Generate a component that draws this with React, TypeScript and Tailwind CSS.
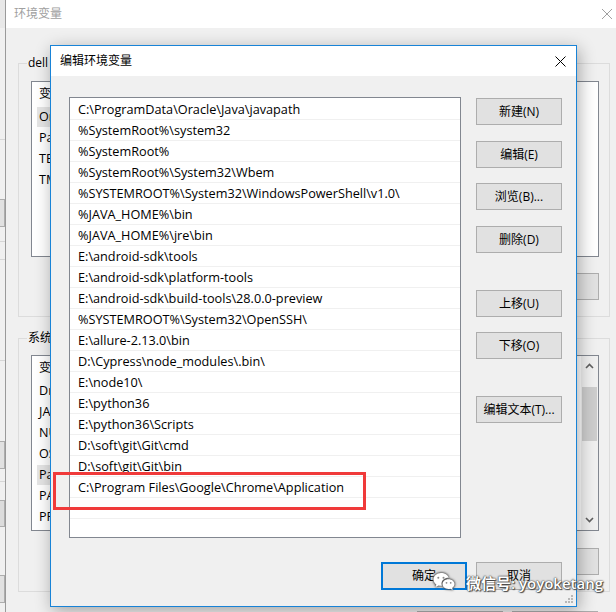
import React from "react";

const font = { fontFamily: '"Open Sans", "Noto Sans CJK SC", sans-serif' };

const paths: string[] = [
  "C:\\ProgramData\\Oracle\\Java\\javapath",
  "%SystemRoot%\\system32",
  "%SystemRoot%",
  "%SystemRoot%\\System32\\Wbem",
  "%SYSTEMROOT%\\System32\\WindowsPowerShell\\v1.0\\",
  "%JAVA_HOME%\\bin",
  "%JAVA_HOME%\\jre\\bin",
  "E:\\android-sdk\\tools",
  "E:\\android-sdk\\platform-tools",
  "E:\\android-sdk\\build-tools\\28.0.0-preview",
  "%SYSTEMROOT%\\System32\\OpenSSH\\",
  "E:\\allure-2.13.0\\bin",
  "D:\\Cypress\\node_modules\\.bin\\",
  "E:\\node10\\",
  "E:\\python36",
  "E:\\python36\\Scripts",
  "D:\\soft\\git\\Git\\cmd",
  "D:\\soft\\git\\Git\\bin",
  "C:\\Program Files\\Google\\Chrome\\Application",
  "",
];

const userVars = [
  ["OneDrive", "C:\\Users\\dell\\OneDrive"],
  ["Path", "C:\\Users\\dell\\AppData"],
  ["TEMP", "C:\\Users\\dell\\AppData"],
  ["TMP", "C:\\Users\\dell\\AppData"],
];

const sysVars = [
  ["DriverData", "C:\\Windows\\System32"],
  ["JAVA_HOME", "C:\\Program Files\\Java"],
  ["NUMBER_OF_PROCESSORS", "4"],
  ["OS", "Windows_NT"],
  ["Path", "C:\\ProgramData\\Oracle"],
  ["PATHEXT", ".COM;.EXE;.BAT"],
  ["PROCESSOR_ARCHITECTURE", "AMD64"],
];

// side buttons of the edit dialog: [label, top margin]
const sideButtons: [string, string][] = [
  ["新建(N)", "mt-[1px]"],
  ["编辑(E)", "mt-[16px]"],
  ["浏览(B)...", "mt-[15px]"],
  ["删除(D)", "mt-[16px]"],
  ["上移(U)", "mt-[37px]"],
  ["下移(O)", "mt-[15px]"],
  ["编辑文本(T)...", "mt-[37px]"],
];

function WinButton({ label, primary }: { label: string; primary?: boolean }) {
  return (
    <div
      className={
        "w-[86px] h-[28px] flex items-center justify-center bg-[#e1e1e1] text-[12px] text-black " +
        (primary ? "border-2 border-[#0078d7]" : "border border-[#adadad]")
      }
    >
      {label}
    </div>
  );
}

function VarList({
  rows,
  selected,
  scroll,
}: {
  rows: string[][];
  selected: number;
  scroll?: boolean;
}) {
  return (
    <div className="ml-[12px] w-[568px] h-[176px] bg-white border border-[#828790] flex">
      <div className="flex-1 flex flex-col">
        <div className="h-[24px] flex items-center text-[12px] text-black">
          <span className="pl-[7px] w-[170px]">变量</span>
          <span className="pl-[7px]">值</span>
        </div>
        {rows.map((r, i) => (
          <div key={i} className="h-[21px] flex items-center text-[12.6px] text-black">
            <div className="w-[170px] pl-[5px] overflow-hidden">
              <span
                className={
                  "inline-block px-[2px] leading-[20px] whitespace-nowrap " +
                  (i === selected ? "bg-[#e5e5e5]" : "")
                }
              >
                {r[0]}
              </span>
            </div>
            <span className="pl-[7px]">{r[1]}</span>
          </div>
        ))}
      </div>
      {scroll && (
        <div className="w-[17px] bg-[#f0f0f0] flex flex-col items-center">
          <svg width="17" height="17" viewBox="0 0 17 17" className="mt-[2px]">
            <path d="M5 10 L8.5 6.5 L12 10" stroke="#606060" strokeWidth="1.6" fill="none" />
          </svg>
          <div className="mt-[12px] w-[15px] h-[54px] bg-[#cdcdcd]" />
          <div className="flex-1" />
          <svg width="17" height="17" viewBox="0 0 17 17" className="mb-[2px]">
            <path d="M5 7 L8.5 10.5 L12 7" stroke="#606060" strokeWidth="1.6" fill="none" />
          </svg>
        </div>
      )}
    </div>
  );
}

function BackButtons() {
  return (
    <div className="flex justify-end gap-[9px] pr-[10px]">
      <div className="w-[86px] h-[27px] bg-[#e1e1e1] border border-[#adadad]" />
      <div className="w-[86px] h-[27px] bg-[#e1e1e1] border border-[#adadad]" />
      <div className="w-[86px] h-[27px] bg-[#e1e1e1] border border-[#adadad]" />
    </div>
  );
}

export default function App() {
  return (
    <div className="relative w-[616px] h-[612px] overflow-hidden bg-[#f0f0f0]" style={font}>
      {/* window behind, left edge */}
      <div className="absolute left-0 top-0 w-[5px] h-[612px] bg-[#f0f0f0] flex flex-col">
        <div className="h-[28px] bg-[#e8e8e8]" />
        <div className="h-[112px] border-b border-[#d6d6d6]" />
        <div className="mt-[59px] h-[28px] bg-[#e1e1e1] border-y border-r border-[#adadad]" />
        <div className="h-[15px] border-b border-[#d6d6d6]" />
        <div className="h-[18px] border-b border-[#d6d6d6]" />
        <div className="mt-[100px] h-[1px] bg-[#d6d6d6]" />
        <div className="mt-[80px] h-[28px] bg-[#e1e1e1] border-y border-r border-[#adadad]" />
        <div className="h-[13px] border-b border-[#d6d6d6]" />
        <div className="mt-[18px] h-[27px] bg-[#dcdcdc] border-y border-r border-[#adadad]" />
        <div className="mt-[48px] h-[28px] bg-[#e1e1e1] border-y border-r border-[#adadad]" />
      </div>

      {/* background dialog 环境变量 */}
      <div className="absolute left-[5px] top-0 w-[611px] h-[640px] border-l border-[#9a9a9a] flex flex-col bg-[#f0f0f0]">
        <div className="h-[28px] bg-white flex items-center pl-[8px] pr-[4px] shrink-0">
          <span className="text-[12px] text-[#a0a0a0]">环境变量</span>
          <svg width="10" height="10" viewBox="0 0 10 10" className="ml-auto">
            <path d="M0 0 L10 10 M10 0 L0 10" stroke="#a0a0a0" strokeWidth="1" />
          </svg>
        </div>

        <fieldset className="ml-[12px] mt-[27px] w-[592px] h-[262px] border border-[#dcdcdc] pb-[16px]">
          <legend className="ml-[8px] px-[1px] text-[12px] leading-[16px] text-black">dell 的用户变量</legend>
          <div className="mt-[10px]">
            <VarList rows={userVars} selected={0} />
          </div>
          <div className="mt-[16px]">
            <BackButtons />
          </div>
        </fieldset>

        <fieldset className="ml-[12px] mt-[13px] w-[592px] h-[262px] border border-[#dcdcdc]">
          <legend className="ml-[8px] px-[1px] text-[12px] leading-[16px] text-black">系统变量</legend>
          <div className="mt-[9px]">
            <VarList rows={sysVars} selected={4} scroll />
          </div>
          <div className="mt-[17px]">
            <BackButtons />
          </div>
        </fieldset>

        <div className="mt-[19px] flex justify-end gap-[9px] pr-[18px]">
          <div className="w-[86px] h-[27px] bg-[#e1e1e1] border border-[#adadad]" />
          <div className="w-[86px] h-[27px] bg-[#e1e1e1] border border-[#adadad]" />
        </div>
      </div>

      {/* foreground dialog 编辑环境变量 */}
      <div className="absolute left-[50px] top-[45px] w-[527px] h-[562px] border border-[#1883d7] bg-[#f0f0f0] flex flex-col shadow-[2px_4px_16px_rgba(0,0,0,0.32)]">
        <div className="h-[30px] bg-white flex items-center pl-[9px] pr-[10px] shrink-0">
          <span className="text-[12px] text-black">编辑环境变量</span>
          <svg width="11" height="11" viewBox="0 0 11 11" className="ml-auto">
            <path d="M0.5 0.5 L10.5 10.5 M10.5 0.5 L0.5 10.5" stroke="#000" strokeWidth="1" />
          </svg>
        </div>

        <div className="flex-1 flex flex-col pl-[18px] pr-[14px] pt-[21px] pb-[16px]">
          <div className="flex gap-[15px]">
            <div className="w-[392px] h-[441px] bg-white border border-[#828790] pt-[1px] flex flex-col">
              {paths.map((p, i) => (
                <div
                  key={i}
                  className="h-[21px] shrink-0 border-b border-[#f0f0f0] flex items-center pl-[8px] pt-[1px] text-[12.7px] text-black whitespace-nowrap"
                >
                  {p}
                </div>
              ))}
            </div>
            <div className="flex flex-col">
              {sideButtons.map(([label, mt]) => (
                <div key={label} className={mt}>
                  <div className="w-[86px] h-[27px] flex items-center justify-center bg-[#e1e1e1] border border-[#adadad] text-[12px] text-black">
                    {label}
                  </div>
                </div>
              ))}
            </div>
          </div>

          <div className="mt-[24px] flex justify-end gap-[9px]">
            <WinButton label="确定" primary />
            <WinButton label="取消" />
          </div>
        </div>

        {/* resize grip */}
        <svg width="8" height="8" viewBox="0 0 8 8" className="absolute right-[3px] bottom-[3px]">
          <rect x="6" y="0" width="2" height="2" fill="#b8b8b8" />
          <rect x="3" y="3" width="2" height="2" fill="#b8b8b8" />
          <rect x="6" y="3" width="2" height="2" fill="#b8b8b8" />
          <rect x="0" y="6" width="2" height="2" fill="#b8b8b8" />
          <rect x="3" y="6" width="2" height="2" fill="#b8b8b8" />
          <rect x="6" y="6" width="2" height="2" fill="#b8b8b8" />
        </svg>
      </div>

      {/* red highlight */}
      <div className="absolute left-[53px] top-[472px] w-[313px] h-[38px] border-[3px] border-[#f03a3a]" />

      {/* watermark */}
      <div className="absolute left-[432px] top-[571px] flex items-center gap-[8px]">
        <svg width="26" height="24" viewBox="0 0 26 24" style={{ filter: "drop-shadow(0 0 1px #444) drop-shadow(0 0 1px #666)" }}>
          <path
            d="M9 2 C4.5 2 1.5 5 1.5 8.5 C1.5 10.6 2.6 12.3 4.3 13.4 L3.6 16 L6.6 14.5 C7.4 14.7 8.2 14.8 9 14.8 C9.3 14.8 9.6 14.8 9.9 14.7 C9.6 14 9.5 13.3 9.5 12.6 C9.5 9.3 12.6 6.7 16.4 6.7 C16.5 6.7 16.6 6.7 16.7 6.7 C15.9 4 12.8 2 9 2 Z"
            fill="#fff"
          />
          <path
            d="M16.5 8.2 C12.9 8.2 10.5 10.5 10.5 13.1 C10.5 15.8 12.9 18 16.5 18 C17.1 18 17.7 17.9 18.3 17.8 L20.8 19 L20.2 16.9 C21.6 16 22.5 14.6 22.5 13.1 C22.5 10.5 20 8.2 16.5 8.2 Z"
            fill="#fff"
          />
          <circle cx="6.3" cy="6.8" r="1" fill="#888" />
          <circle cx="11.5" cy="6.8" r="1" fill="#888" />
          <circle cx="14.5" cy="11.8" r="0.9" fill="#888" />
          <circle cx="18.7" cy="11.8" r="0.9" fill="#888" />
        </svg>
        <span className="text-[15px] leading-[18px] font-semibold text-white [text-shadow:0_0_2px_#333,0_0_1px_#333,1px_1px_1px_#555]">
          微信号: yoyoketang
        </span>
      </div>
    </div>
  );
}
